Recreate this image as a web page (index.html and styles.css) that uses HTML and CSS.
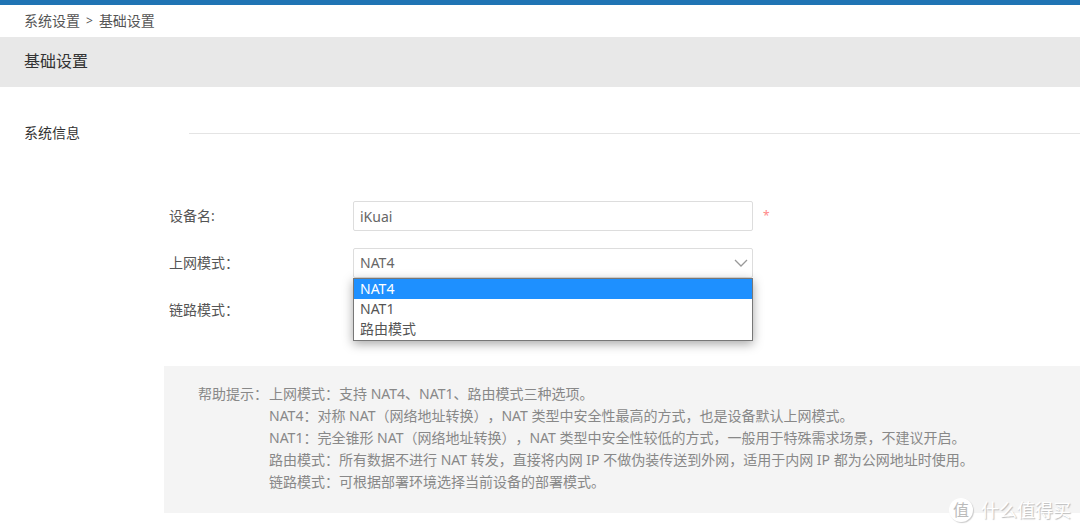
FILE: index.html
```
<!DOCTYPE html>
<html lang="zh-CN">
<head>
  <meta charset="UTF-8" />
  <meta name="viewport" content="width=device-width, initial-scale=1.0"/>
  <title>基础设置</title>
  <link rel="stylesheet" href="styles.css">
</head>
<body>

  <nav class="breadcrumb">
    <a href="#">系统设置</a>
    <span>&gt;</span>
    <a href="#">基础设置</a>
  </nav>

  <header class="title-bar">
    <h1>基础设置</h1>
  </header>

  <main>
    <div class="section-title">
      <h2>系统信息</h2>
      <div class="line"></div>
    </div>

    <form class="settings">
      <div class="row">
        <label for="deviceName">设备名:</label>
        <div class="field">
          <input type="text" id="deviceName" value="iKuai" required>
        </div>
        <span class="required">*</span>
      </div>

      <div class="row">
        <label for="netMode">上网模式：</label>
        <div class="field">
          <select id="netMode">
            <option>NAT4</option>
            <option>NAT1</option>
            <option>路由模式</option>
          </select>
          <svg class="arrow" viewBox="0 0 14 8"><path d="M1 1l6 6 6-6"/></svg>
          <ul class="options" role="listbox">
            <li class="active" role="option" aria-selected="true">NAT4</li>
            <li role="option">NAT1</li>
            <li role="option">路由模式</li>
          </ul>
        </div>
      </div>

      <div class="row">
        <label for="linkMode">链路模式：</label>
        <div class="field">
          <select id="linkMode"></select>
        </div>
      </div>
    </form>

    <section class="help">
      <span class="help-label">帮助提示：</span>
      <div class="help-text">
        <p>上网模式：支持 NAT4、NAT1、路由模式三种选项。</p>
        <p>NAT4：对称 NAT（网络地址转换），NAT 类型中安全性最高的方式，也是设备默认上网模式。</p>
        <p>NAT1：完全锥形 NAT（网络地址转换），NAT 类型中安全性较低的方式，一般用于特殊需求场景，不建议开启。</p>
        <p>路由模式：所有数据不进行 NAT 转发，直接将内网 IP 不做伪装传送到外网，适用于内网 IP 都为公网地址时使用。</p>
        <p>链路模式：可根据部署环境选择当前设备的部署模式。</p>
      </div>
    </section>
  </main>

  <div class="watermark">
    <span class="watermark-logo">值</span>
    <span>什么值得买</span>
  </div>

</body>
</html>
```

FILE: styles.css
```
:root {
  --primary: #2074b4;
  --highlight: #1e90ff;
  --text: #555;
  --text-dark: #333;
  --text-light: #888;
  --border: #ddd;
}

* {
  box-sizing: border-box;
  margin: 0;
  padding: 0;
}

body {
  position: relative;
  min-height: 100vh;
  border-top: 5px solid var(--primary);
  background-color: #fff;
  color: var(--text);
  font-family: "Noto Sans", "Noto Sans CJK SC", sans-serif;
  font-size: 14px;
  line-height: 20px;
  text-spacing-trim: space-all;
}

.breadcrumb {
  display: flex;
  gap: 6px;
  padding: 6px 24px;
}

.breadcrumb a {
  color: inherit;
  text-decoration: none;
}

.breadcrumb span {
  font-size: 12px;
}

.title-bar {
  padding: 14px 24px 16px;
  background-color: #e8e8e8;
}

.title-bar h1 {
  color: var(--text-dark);
  font-size: 16px;
  font-weight: normal;
}

.section-title {
  display: flex;
  align-items: center;
  margin-top: 36px;
  padding-left: 24px;
}

.section-title h2 {
  width: 165px;
  color: var(--text-dark);
  font-size: 14px;
  font-weight: normal;
}

.section-title .line {
  flex: 1;
  height: 1px;
  background-color: #e4e4e4;
}

.settings {
  display: flex;
  flex-direction: column;
  gap: 17px;
  padding: 58px 0 41px 169px;
}

.row {
  display: flex;
  align-items: center;
}

.row label {
  width: 184px;
}

.field {
  position: relative;
  width: 400px;
}

.field input,
.field select {
  display: block;
  width: 100%;
  height: 30px;
  padding: 0 6px;
  border: 1px solid var(--border);
  border-radius: 2px;
  background-color: #fff;
  color: #666;
  font: inherit;
  appearance: none;
}

.arrow {
  position: absolute;
  top: 11px;
  right: 5px;
  width: 14px;
  height: 8px;
  fill: none;
  stroke: #999;
  stroke-width: 1.3;
}

.options {
  position: absolute;
  top: 30px;
  left: 0;
  z-index: 1;
  width: 100%;
  padding-bottom: 1px;
  border: 1px solid #777;
  background-color: #fff;
  box-shadow: 0 3px 10px rgba(0, 0, 0, 0.35);
  list-style: none;
}

.options li {
  padding: 0 6px;
}

.options .active {
  background-color: var(--highlight);
  color: #fff;
}

.required {
  margin-left: 10px;
  color: #f88;
  font-size: 12px;
}

.help {
  display: flex;
  margin-left: 164px;
  padding: 17px 34px 20px;
  background-color: #f4f4f4;
  color: var(--text-light);
  line-height: 22px;
}

.help-label {
  flex: none;
  width: 71px;
}

.watermark {
  position: absolute;
  right: 9px;
  bottom: 10px;
  display: flex;
  align-items: center;
  gap: 8px;
  color: #fff;
  font-size: 18px;
  line-height: 24px;
  text-shadow: 1px 1px 1px #bbb;
}

.watermark-logo {
  width: 24px;
  height: 24px;
  border-radius: 50%;
  background-color: #fff;
  box-shadow: 1px 1px 1px #ccc;
  color: #bbb;
  font-size: 16px;
  text-align: center;
  text-shadow: none;
}
```
